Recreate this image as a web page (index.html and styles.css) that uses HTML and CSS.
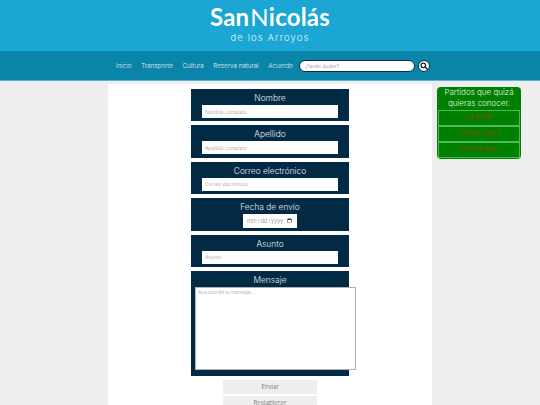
FILE: index.html
```html
<!DOCTYPE html>
<html lang="es">
<head>
<meta charset="utf-8">
<title>San Nicolás de los Arroyos</title>
<link rel="stylesheet" href="styles.css">
</head>
<body>
<header class="top">
  <div class="logo">San<span class="logo-cap">N</span>icolás</div>
  <div class="sublogo">de los Arroyos</div>
</header>
<nav class="nav">
  <a>Inicio</a>
  <a>Transporte</a>
  <a>Cultura</a>
  <a>Reserva natural</a>
  <a>Acuerdo</a>
  <input class="search" type="text" placeholder="¿Tenés dudas?">
  <span class="search-btn">
    <svg viewBox="0 0 12 12" width="10" height="10"><circle cx="5.2" cy="5.2" r="2.8" fill="none" stroke="#0c2a3f" stroke-width="1.5"/><path d="M7.3 7.3 10 10" stroke="#0c2a3f" stroke-width="1.7" stroke-linecap="round"/></svg>
  </span>
</nav>
<div class="page">
  <main class="main">
    <form class="form">
      <div class="field"><label>Nombre</label><input type="text" placeholder="Nombre completo"></div>
      <div class="field"><label>Apellido</label><input type="text" placeholder="Apellido completo"></div>
      <div class="field"><label>Correo electrónico</label><input type="text" placeholder="Correo electrónico"></div>
      <div class="field"><label>Fecha de envío</label><input class="date" type="date"></div>
      <div class="field"><label>Asunto</label><input type="text" placeholder="Asunto"></div>
      <div class="field field-msg"><label>Mensaje</label><textarea placeholder="Aca escribi tu mensaje..."></textarea></div>
      <button type="button" class="btn">Enviar</button>
      <button type="button" class="btn">Restablecer</button>
    </form>
  </main>
  <aside class="side">
    <p>Partidos que quizá quieras conocer.</p>
    <a>La Emilia</a>
    <a>Campo Salles</a>
    <a>General Rojo</a>
  </aside>
</div>
</body>
</html>
```
FILE: styles.css
```css
* { box-sizing: border-box; }
html, body { height: 405px; overflow: hidden; }
body { margin: 0; background: #eeeeee; font-family: Inter, "Liberation Sans", sans-serif; font-weight: 300; }

.top { height: 51px; background: #1ba6d3; color: #fff; text-align: center; padding-top: 3px; }
.logo { font-family: Lato, sans-serif; font-size: 24px; line-height: 28px; font-weight: 700; letter-spacing: 0.2px; }
.logo-cap { margin-left: 1px; font-weight: 400; }
.sublogo { font-size: 9.5px; line-height: 12px; letter-spacing: 1.1px; color: #e6f5fb; margin-top: 1px; font-weight: 300; }

.nav { height: 30px; background: #0b84a9; border-bottom: 1px solid #5cb4d2; display: flex; align-items: center; padding-left: 116px; color: #e4f2f7; font-size: 6.3px; font-weight: 300; }
.nav a { margin-right: 9.6px; }
.search { width: 116px; height: 12px; margin-left: -4px; border: 1px solid #0c2a3f; border-radius: 7px; background: #fff; padding: 0 5px; font-family: inherit; font-size: 5px; font-weight: 300; outline: none; }
.search::placeholder { color: #8b8b8b; }
.search-btn { width: 12px; height: 12px; margin-left: 3px; border-radius: 50%; background: #fff; border: 1px solid #0c2a3f; display: flex; align-items: center; justify-content: center; }

.page { display: flex; align-items: flex-start; padding: 3px 0 0 108px; gap: 5px; }
.main { width: 324px; height: 330px; background: #fff; flex: none; padding-top: 5px; }
.form { display: flex; flex-direction: column; align-items: center; }

.field { width: 158px; height: 32.4px; margin-bottom: 4px; background: #022a44; display: flex; flex-direction: column; align-items: center; padding-top: 3px; color: #e6edf2; }
.field label { font-size: 8.4px; line-height: 12px; height: 13px; }
.field input { width: 136px; height: 13px; border: 0; background: #fff; padding: 0 3px; font-family: inherit; font-size: 5px; font-weight: 300; outline: none; border-radius: 0; }
.field input::placeholder, .field textarea::placeholder { color: #9a9a9a; }
.field input.date { width: 54px; height: 14px; font-size: 5.5px; color: #777; }
.field-msg { height: 105px; width: 158px; align-items: flex-start; }
.field-msg label { align-self: center; }
.field-msg textarea { width: 161px; height: 83px; margin-left: 4px; border: 1px solid #b0b0b0; background: #fff; padding: 1px 2px; font-family: inherit; font-size: 5px; font-weight: 300; resize: none; flex: none; outline: none; }

.btn { width: 94px; height: 14px; margin-bottom: 2px; border: 0; background: #eeeeee; color: #666; font-family: inherit; font-size: 6px; font-weight: 300; padding: 0; }

.side { width: 84px; height: 72px; margin-top: 3px; background: #008000; border-radius: 4px; color: #e4f3e4; display: flex; flex-direction: column; padding: 0 1px; }
.side p { margin: 0 0 2px; font-size: 8px; line-height: 10.5px; text-align: center; }
.side a { height: 15.6px; margin-bottom: 0.6px; border: 1px solid #4db85a; color: #a83a08; font-size: 6.4px; line-height: 13.6px; text-align: center; font-weight: 300; }
```
